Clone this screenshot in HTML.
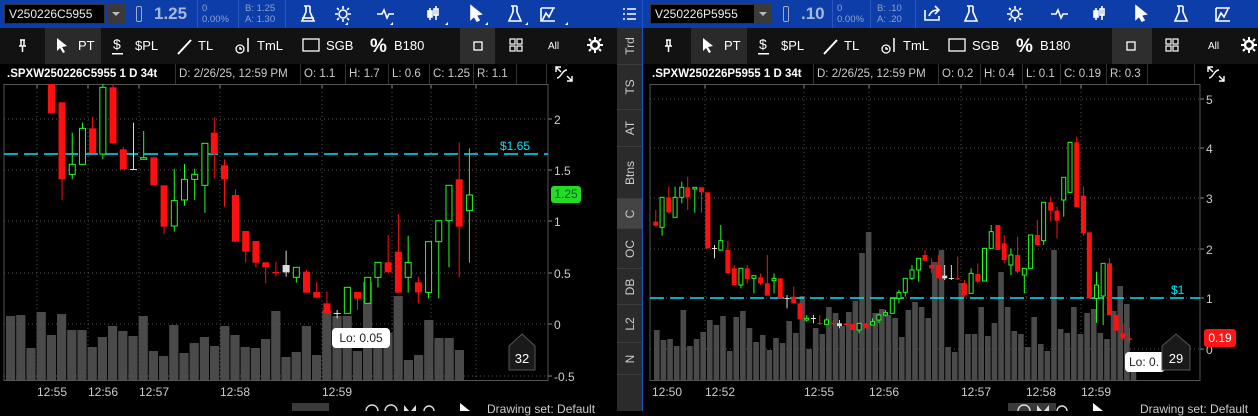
<!DOCTYPE html>
<html><head><meta charset="utf-8"><style>
*{margin:0;padding:0;box-sizing:border-box}
body{width:1258px;height:411px;background:#000;overflow:hidden;font-family:"Liberation Sans",sans-serif;color:#ddd;position:relative}
.a{position:absolute}
.blue{background:#0c3da8;height:28px;top:0}
.sym{background:#000;color:#eee;font-size:12px;line-height:19px;padding-left:4px;top:4px;height:20px;border:1px solid #333}
.dd{background:#3a3a3a;top:4px;height:20px;width:18px}
.tb{background:#121212;top:28px;height:36px}
.hd{top:64px;height:20px;background:#000;font-size:11.5px;color:#ccc;line-height:20px}
.hd span{position:absolute;top:0;border-right:1px solid #333;height:20px;padding-left:3px;white-space:nowrap;overflow:hidden}
.strip{background:#2b2b2b}
.tab{position:absolute;left:0;width:25px;border-bottom:1px solid #3c3c3c;color:#ccc;font-size:12px}
.tab b{position:absolute;left:50%;top:50%;transform:translate(-50%,-50%) rotate(-90deg);font-weight:normal;white-space:nowrap}
.sep{background:#2a56c0;width:1px;top:0;height:28px}
</style></head><body>

<!-- LEFT PANEL -->
<div class="a blue" style="left:0;width:617px"></div>
<div class="a sym" style="left:4px;width:101px">V250226C5955</div>
<div class="a dd" style="left:107px"><svg width="18" height="20"><path d="M5 8h8l-4 4z" fill="#bbb"/></svg></div>
<div class="a" style="left:136px;top:6px;width:6px;height:16px;border:1px solid #aab;border-radius:2px"></div>
<div class="a" style="left:154px;top:4px;font-size:17px;font-weight:bold;color:#a9b8d6">1.25</div>
<div class="a" style="left:202px;top:3px;font-size:9.5px;color:#8fa2cc;line-height:11px">0<br>0.00%</div>
<div class="a" style="left:245px;top:3px;font-size:9.5px;color:#8fa2cc;line-height:11px">B: 1.25<br>A: 1.30</div>
<div class="a sep" style="left:197px"></div><div class="a sep" style="left:238px"></div><div class="a sep" style="left:285px"></div>
<svg class="a" style="left:285px;top:0" width="332" height="28">
 <g fill="none" stroke="#fff" stroke-width="1.6">
  <path d="M19 6h6M21 6v6l-4 9h12l-4-9V6"/><path d="M17 18h12" />
  <circle cx="58" cy="14" r="4"/><path d="M58 6v3M58 19v3M50 14h3M63 14h3M52 8l2 2M62 18l2 2M52 20l2-2M62 10l2-2"/>
  <path d="M92 14h5l2-4 3 8 2-4h5"/>
  <path d="M145 8v12M151 6v14"/><rect x="143" y="11" width="4" height="6" fill="#fff"/><rect x="149" y="9" width="4" height="6"/>
  <path d="M186 6l10 8-5 1 3 5-2 1-3-5-3 3z" fill="#fff"/>
  <path d="M226 6h6M228 6v6l-4 9h12l-4-9V6"/>
  <path d="M256 8h14M257 21l4-8 3 4 4-8"/><path d="M256 8v13h14"/>
 </g>
 <g fill="#fff"><path d="M60 25l3-3v3z"/><path d="M105 25l3-3v3z"/><path d="M160 25l3-3v3z"/><path d="M200 25l3-3v3z"/><path d="M240 25l3-3v3z"/><path d="M280 25l3-3v3z"/></g>
</svg>
<div class="a tb" style="left:0;width:617px"></div>
<div class="a" style="left:45px;top:28px;width:56px;height:36px;background:#2a2a2a"></div>
<div class="a" style="left:460px;top:28px;width:35px;height:36px;background:#2e2e2e"></div>
<svg class="a" style="left:0;top:28px" width="617" height="36" font-family="Liberation Sans" font-size="13" fill="#fff">
 <path d="M20 12h5M21 12v6h3v-6M19 18h7M22.5 18v6" stroke="#fff" fill="none" stroke-width="1.5"/>
 <path d="M57 10l10 8-5 1 3 5-2 1-3-5-3 3z"/><text x="78" y="22">PT</text>
 <text x="113" y="21" font-size="14">$</text><rect x="112" y="25" width="11" height="1.5"/><text x="135" y="22">$PL</text>
 <path d="M178 26l13-14" stroke="#fff" stroke-width="2"/><text x="198" y="22">TL</text>
 <circle cx="240" cy="21" r="4" stroke="#fff" fill="none" stroke-width="1.3"/><path d="M240 19v2h2M248 10v14" stroke="#fff" fill="none" stroke-width="1.5"/><text x="257" y="22">TmL</text>
 <rect x="303" y="11" width="16" height="12" stroke="#fff" fill="none" stroke-width="1.3"/><text x="326" y="22">SGB</text>
 <text x="370" y="24" font-size="19" font-weight="bold">%</text><text x="394" y="22">B180</text>
 <rect x="474" y="14" width="8" height="8" stroke="#fff" fill="none" stroke-width="1.3"/>
 <g stroke="#fff" fill="none" stroke-width="1.2"><rect x="510" y="11" width="5" height="5"/><rect x="517" y="11" width="5" height="5"/><rect x="510" y="18" width="5" height="5"/><rect x="517" y="18" width="5" height="5"/></g>
 <text x="548" y="21" font-size="10">All</text>
 <circle cx="595" cy="17" r="4" stroke="#fff" fill="none" stroke-width="2.5"/><path d="M595 9v3M595 22v3M587 17h3M600 17h3M589 11l2 2M599 21l2 2M589 23l2-2M599 13l2-2" stroke="#fff" stroke-width="2"/>
</svg>
<div class="a hd" style="left:0;width:617px">
 <span style="left:4px;width:172px;font-weight:bold;color:#fff">.SPXW250226C5955 1 D 34t</span>
 <span style="left:176px;width:125px">D: 2/26/25, 12:59 PM</span>
 <span style="left:301px;width:45px">O: 1.1</span>
 <span style="left:346px;width:43px">H: 1.7</span>
 <span style="left:389px;width:41px">L: 0.6</span>
 <span style="left:430px;width:44px">C: 1.25</span>
 <span style="left:474px;width:43px">R: 1.1</span>
 <span style="left:517px;width:30px"></span>
</div>
<svg class="a" style="left:553px;top:64px" width="22" height="20"><path d="M3 3l5 5M3 8V3h5M4 14c4 0 5-8 10-8M14 12l5 5M19 12v5h-5" stroke="#fff" fill="none" stroke-width="1.4"/></svg>
<svg id="L" class="a" style="left:0;top:84px" width="617" height="316"></svg>
<div class="a" style="left:292px;top:403px;width:37px;height:8px;background:#3a3a3a"></div>
<div class="a" style="left:487px;top:402px;font-size:12px;color:#ccc">Drawing set: Default</div>
<svg class="a" style="left:360px;top:400px" width="120" height="11"><g stroke="#ddd" fill="none" stroke-width="1.4"><circle cx="12" cy="11" r="6"/><circle cx="31" cy="11" r="6"/><circle cx="69" cy="11" r="5"/></g><path d="M44 5l5 6-5 0zM56 5l-5 6h5z" fill="#ddd"/><path d="M100 3l10 8h-10z" fill="#fff"/></svg>

<!-- STRIP -->
<div class="a strip" style="left:617px;top:28px;width:25px;height:383px">
 <div class="tab" style="top:0;height:37px"><b>Trd</b></div>
 <div class="tab" style="top:37px;height:45px"><b>TS</b></div>
 <div class="tab" style="top:82px;height:37px"><b>AT</b></div>
 <div class="tab" style="top:119px;height:52px"><b>Btns</b></div>
 <div class="tab" style="top:171px;height:30px;background:#444"><b>C</b></div>
 <div class="tab" style="top:201px;height:40px"><b>OC</b></div>
 <div class="tab" style="top:241px;height:36px"><b>DB</b></div>
 <div class="tab" style="top:277px;height:38px"><b>L2</b></div>
 <div class="tab" style="top:315px;height:32px"><b>N</b></div>
</div>
<div class="a" style="left:617px;top:0;width:25px;height:28px;background:#0c3da8"><svg width="25" height="28"><path d="M6 9h2M10 9h9M6 14h2M10 14h9M6 19h2M10 19h9" stroke="#fff" stroke-width="1.6"/></svg></div>
<div class="a" style="left:642px;top:0;width:1px;height:411px;background:#1e54c8"></div>

<!-- RIGHT PANEL -->
<div class="a blue" style="left:643px;width:615px"></div>
<div class="a sym" style="left:650px;width:121px">V250226P5955</div>
<div class="a dd" style="left:754px"><svg width="18" height="20"><path d="M5 8h8l-4 4z" fill="#bbb"/></svg></div>
<div class="a" style="left:783px;top:6px;width:6px;height:16px;border:1px solid #aab;border-radius:2px"></div>
<div class="a" style="left:801px;top:4px;font-size:17px;font-weight:bold;color:#a9b8d6">.10</div>
<div class="a" style="left:837px;top:3px;font-size:9.5px;color:#8fa2cc;line-height:11px">0<br>0.00%</div>
<div class="a" style="left:877px;top:3px;font-size:9.5px;color:#8fa2cc;line-height:11px">B: .10<br>A: .20</div>
<div class="a sep" style="left:832px"></div><div class="a sep" style="left:870px"></div><div class="a sep" style="left:915px"></div>
<svg class="a" style="left:915px;top:0" width="343" height="28">
 <g fill="none" stroke="#fff" stroke-width="1.6">
  <path d="M10 10v10h14v-4M14 16c2-5 5-6 10-6M20 6l4 4-4 4"/>
  <path d="M52 6h6M54 6v6l-4 9h12l-4-9V6"/>
  <circle cx="100" cy="14" r="4"/><path d="M100 6v3M100 19v3M92 14h3M105 14h3M94 8l2 2M104 18l2 2M94 20l2-2M104 10l2-2"/>
  <path d="M136 14h5l2-4 3 8 2-4h5"/>
  <path d="M181 8v12M187 6v14"/><rect x="179" y="11" width="4" height="6" fill="#fff"/><rect x="185" y="9" width="4" height="6"/>
  <path d="M221 6l10 8-5 1 3 5-2 1-3-5-3 3z" fill="#fff"/>
  <path d="M262 6h6M264 6v6l-4 9h12l-4-9V6"/>
  <path d="M301 8h14M302 21l4-8 3 4 4-8"/><path d="M301 8v13h14"/>
 </g>
</svg>
<div class="a tb" style="left:643px;width:615px"></div>
<div class="a" style="left:691px;top:28px;width:56px;height:36px;background:#2a2a2a"></div>
<div class="a" style="left:1112px;top:28px;width:40px;height:36px;background:#2e2e2e"></div>
<svg class="a" style="left:646px;top:28px" width="612" height="36" font-family="Liberation Sans" font-size="13" fill="#fff">
 <path d="M20 12h5M21 12v6h3v-6M19 18h7M22.5 18v6" stroke="#fff" fill="none" stroke-width="1.5"/>
 <path d="M57 10l10 8-5 1 3 5-2 1-3-5-3 3z"/><text x="78" y="22">PT</text>
 <text x="113" y="21" font-size="14">$</text><rect x="112" y="25" width="11" height="1.5"/><text x="135" y="22">$PL</text>
 <path d="M178 26l13-14" stroke="#fff" stroke-width="2"/><text x="198" y="22">TL</text>
 <circle cx="240" cy="21" r="4" stroke="#fff" fill="none" stroke-width="1.3"/><path d="M240 19v2h2M248 10v14" stroke="#fff" fill="none" stroke-width="1.5"/><text x="257" y="22">TmL</text>
 <rect x="303" y="11" width="16" height="12" stroke="#fff" fill="none" stroke-width="1.3"/><text x="326" y="22">SGB</text>
 <text x="370" y="24" font-size="19" font-weight="bold">%</text><text x="394" y="22">B180</text>
 <rect x="481" y="14" width="8" height="8" stroke="#fff" fill="none" stroke-width="1.3"/>
 <g stroke="#fff" fill="none" stroke-width="1.2"><rect x="520" y="11" width="5" height="5"/><rect x="527" y="11" width="5" height="5"/><rect x="520" y="18" width="5" height="5"/><rect x="527" y="18" width="5" height="5"/></g>
 <text x="562" y="21" font-size="10">All</text>
 <circle cx="603" cy="17" r="4" stroke="#fff" fill="none" stroke-width="2.5"/><path d="M603 9v3M603 22v3M595 17h3M608 17h3M597 11l2 2M607 21l2 2M597 23l2-2M607 13l2-2" stroke="#fff" stroke-width="2"/>
</svg>
<div class="a hd" style="left:643px;width:615px">
 <span style="left:6px;width:165px;font-weight:bold;color:#fff">.SPXW250226P5955 1 D 34t</span>
 <span style="left:171px;width:125px">D: 2/26/25, 12:59 PM</span>
 <span style="left:296px;width:42px">O: 0.2</span>
 <span style="left:338px;width:42px">H: 0.4</span>
 <span style="left:380px;width:38px">L: 0.1</span>
 <span style="left:418px;width:46px">C: 0.19</span>
 <span style="left:464px;width:41px">R: 0.3</span>
 <span style="left:505px;width:47px"></span>
</div>
<svg class="a" style="left:1205px;top:64px" width="22" height="20"><path d="M3 3l5 5M3 8V3h5M4 14c4 0 5-8 10-8M14 12l5 5M19 12v5h-5" stroke="#fff" fill="none" stroke-width="1.4"/></svg>
<svg id="R" class="a" style="left:643px;top:84px" width="615" height="316"></svg>
<div class="a" style="left:1008px;top:403px;width:48px;height:8px;background:#3a3a3a"></div>
<div class="a" style="left:1140px;top:402px;font-size:12px;color:#ccc">Drawing set: Default</div>
<svg class="a" style="left:1015px;top:400px" width="120" height="11"><g stroke="#ddd" fill="none" stroke-width="1.4"><circle cx="-10" cy="11" r="6"/><circle cx="9" cy="11" r="6"/><circle cx="47" cy="11" r="5"/></g><path d="M22 5l5 6-5 0zM34 5l-5 6h5z" fill="#ddd"/><path d="M78 3l10 8h-10z" fill="#fff"/></svg>

<script>
function el(s,t,a,txt){var e=document.createElementNS("http://www.w3.org/2000/svg",t);for(var k in a)e.setAttribute(k,a[k]);if(txt)e.textContent=txt;s.appendChild(e);return e;}
function chart(id,o){
 var s=document.getElementById(id),oy=84;
 var vx=o.vx0;o.vol.forEach(function(t,i){el(s,'rect',{x:vx+i*o.vw,y:t-oy,width:o.vw-1,height:o.pb-t,fill:'#4a4a4a'});});
 o.ticks.forEach(function(t){el(s,'line',{x1:o.pl,x2:o.pr,y1:t[1]-oy,y2:t[1]-oy,stroke:'#555','stroke-dasharray':'1 3'});
   el(s,'line',{x1:o.pr,x2:o.pr+4,y1:t[1]-oy,y2:t[1]-oy,stroke:'#888'});
   el(s,'text',{x:o.pr+6,y:t[1]-oy+5,fill:'#ccc','font-size':12,'font-family':'Liberation Sans'},t[0]);});
 o.vg.forEach(function(x){el(s,'line',{x1:x,x2:x,y1:0,y2:o.pb-oy,stroke:'#555','stroke-dasharray':'1 3'});el(s,'line',{x1:x,x2:x,y1:0,y2:4,stroke:'#888'});});
 el(s,'rect',{x:o.pl,y:0.5,width:o.pr-o.pl,height:o.pb-oy,fill:'none',stroke:'#555'});
 o.tl.forEach(function(t){el(s,'text',{x:t[1],y:312,fill:'#ccc','font-size':12,'font-family':'Liberation Sans'},t[0]);});
 el(s,'line',{x1:o.pl,x2:o.pr,y1:o.lvl-oy,y2:o.lvl-oy,stroke:'#00e8ff','stroke-width':1.4,'stroke-dasharray':'14 6'});
 el(s,'text',{x:o.lvlx,y:o.lvl-oy-4,fill:'#00e8ff','font-size':12,'font-family':'Liberation Sans'},o.lvlt);
 o.c.forEach(function(c){
  var x=c[0]/o.sx+o.ox,bt=c[1]/3+80-oy,bb=c[2]/3+80-oy,wt=c[3]/3+80-oy,wb=c[4]/3+80-oy,col=c[5];
  var w=o.bw,clr=col=='r'?'#ff1010':col=='g'?'#22ff22':'#ddd';
  el(s,'line',{x1:x,x2:x,y1:wt,y2:wb,stroke:clr,'stroke-width':1});
  var h=Math.max(bb-bt,1);
  if(col=='g')el(s,'rect',{x:x-w/2+0.5,y:bt,width:w-1,height:h,fill:'#000',stroke:clr,'stroke-width':1});
  else el(s,'rect',{x:x-w/2,y:bt,width:w,height:h,fill:clr});
 });
}
chart('L',{sx:2.45,ox:0,bw:7,pl:4,pr:548,pb:380,vx0:6,vw:10.2,lvl:154,lvlx:500,lvlt:'$1.65',
 ticks:[['2',119],['1.5',170],['1',221],['0.5',273],['0',324],['-0.5',376]],
 vg:[37,88,139,220,322,392,431,476],tl:[['12:55',37],['12:56',88],['12:57',139],['12:58',220],['12:59',322]],
 vol:[316,315,348,312,335,314,330,330,347,337,326,331,336,316,351,356,325,353,343,337,346,326,335,347,348,339,311,357,352,326,355,310,316,316,351,282,333,333,296,360,355,320,338,338,350],
 c:[[126,10,100,5,100,'r'],[152,67,298,67,360,'r'],[177,253,283,158,298,'g'],[202,145,253,128,253,'g'],[227,145,220,110,220,'r'],[252,22,222,10,238,'g'],[277,22,190,10,190,'r'],[302,208,268,200,268,'r'],[327,267,269,128,268,'w'],[352,233,238,153,238,'g'],[377,232,316,232,316,'r'],[402,316,440,316,462,'r'],[427,362,438,266,455,'g'],[452,298,360,252,377,'g'],[477,283,298,266,360,'g'],[502,190,316,190,398,'g'],[525,158,222,112,295,'r'],[550,256,298,238,380,'r'],[577,345,485,328,485,'r'],[602,453,515,453,548,'r'],[627,483,548,483,562,'r'],[651,547,562,547,610,'r'],[676,576,578,545,590,'r'],[701,555,577,512,590,'w'],[726,562,592,562,608,'g'],[751,575,638,570,638,'r'],[776,636,653,605,655,'r'],[801,670,700,635,700,'r'],[826,699,701,690,715,'w'],[851,622,700,622,700,'g'],[876,636,656,636,690,'r'],[901,592,670,592,670,'g'],[926,547,592,547,622,'g'],[951,547,577,465,577,'r'],[976,515,638,403,638,'r'],[1000,547,592,467,638,'g'],[1025,607,637,590,670,'r'],[1050,485,637,485,655,'g'],[1075,422,485,422,655,'g'],[1100,316,422,316,562,'g'],[1125,298,440,187,592,'r'],[1150,345,392,205,548,'g']]});
chart('R',{sx:2.537,ox:-3,bw:5,pl:7,pr:557,pb:380,vx0:11,vw:6.62,lvl:298,lvlx:528,lvlt:'$1',
 ticks:[['5',99],['4',148],['3',198],['2',249],['1',298],['0',349]],
 vg:[62,161,226,318,383,438],tl:[['12:50',9],['12:52',62],['12:55',161],['12:56',226],['12:57',318],['12:58',383],['12:59',438]],
 vol:[330,340,339,346,310,346,339,332,320,325,316,351,317,311,328,342,335,350,338,343,321,333,296,349,328,334,307,313,326,312,301,253,232,313,309,315,318,337,310,302,307,318,262,250,347,352,283,334,334,307,336,323,272,307,331,334,347,317,344,351,250,329,333,307,334,313,309,333,339,311,286,304,370],
 c:[[40,425,437,390,440,'r'],[56,352,442,352,467,'g'],[73,352,397,320,400,'r'],[89,352,412,320,412,'g'],[106,322,352,305,370,'g'],[121,322,352,290,390,'r'],[139,322,327,322,398,'g'],[156,322,337,322,398,'r'],[172,337,505,337,505,'r'],[189,504,506,495,535,'w'],[205,482,510,435,512,'g'],[223,510,580,482,580,'r'],[239,565,615,555,615,'r'],[256,565,615,565,625,'g'],[272,565,597,555,610,'r'],[289,587,595,587,640,'g'],[306,592,610,580,615,'r'],[323,610,647,525,647,'r'],[340,595,602,580,640,'g'],[356,595,655,595,655,'r'],[373,654,656,645,685,'w'],[390,650,670,620,670,'r'],[406,670,718,670,718,'r'],[423,715,720,705,725,'g'],[440,714,716,705,730,'w'],[456,729,731,705,735,'r'],[473,720,733,715,735,'g'],[490,729,731,720,740,'r'],[506,730,738,720,745,'w'],[523,730,735,730,735,'r'],[540,732,750,732,750,'r'],[556,730,750,730,760,'g'],[573,730,745,730,745,'r'],[590,725,735,715,735,'g'],[606,705,720,700,730,'g'],[623,698,705,690,710,'g'],[640,655,700,655,700,'g'],[657,637,655,630,670,'g'],[673,595,637,595,650,'g'],[690,570,595,555,600,'g'],[707,535,570,535,605,'g'],[723,525,542,510,545,'r'],[740,555,565,535,580,'r'],[757,555,595,525,595,'r'],[773,587,595,555,600,'w'],[790,594,596,555,600,'w'],[806,595,598,530,600,'r'],[823,610,645,600,650,'r'],[840,580,640,565,640,'g'],[857,582,605,550,610,'r'],[874,505,603,505,603,'g'],[891,455,505,435,505,'g'],[908,435,510,435,510,'r'],[924,490,540,465,550,'r'],[941,525,555,505,585,'g'],[958,525,575,470,580,'r'],[975,565,585,565,640,'g'],[991,465,565,465,565,'g'],[1008,465,495,420,495,'r'],[1024,367,482,367,495,'g'],[1042,367,392,350,425,'r'],[1058,392,422,380,475,'r'],[1075,292,360,292,410,'g'],[1091,187,337,187,337,'g'],[1108,187,382,170,382,'r'],[1125,347,460,320,467,'r'],[1140,457,655,457,655,'r'],[1158,615,655,575,728,'g'],[1175,550,648,550,735,'g'],[1191,550,705,535,705,'r'],[1208,705,752,705,752,'r'],[1225,760,775,730,780,'r'],[1242,775,779,745,790,'r']]});
</script>

<div class="a" style="left:551px;top:186px;width:30px;height:17px;background:#22dd22;border-radius:3px;color:#063;font-size:12px;text-align:center;line-height:17px">1.25</div>
<div class="a" style="left:332px;top:328px;width:58px;height:20px;background:#fff;border-radius:4px;color:#222;font-size:12px;line-height:20px;text-align:center">Lo: 0.05</div>
<svg class="a" style="left:508px;top:333px" width="28" height="38"><path d="M1 13L14 1l13 12v24H1z" fill="#1a1a1a" stroke="#555"/><text x="14" y="30" fill="#fff" font-size="13" text-anchor="middle" font-family="Liberation Sans">32</text></svg>
<div class="a" style="left:1204px;top:329px;width:32px;height:18px;background:#ff1515;border-radius:3px;color:#fff;font-size:12px;line-height:18px;text-align:center">0.19</div>
<div class="a" style="left:1125px;top:352px;width:40px;height:20px;background:#fff;border-radius:4px;color:#222;font-size:12px;line-height:20px;padding-left:4px;overflow:hidden">Lo: 0.</div>
<svg class="a" style="left:1161px;top:333px" width="30" height="38"><path d="M1 13L15 1l14 12v24H1z" fill="#1a1a1a" stroke="#555"/><text x="15" y="30" fill="#fff" font-size="13" text-anchor="middle" font-family="Liberation Sans">29</text></svg>
</body></html>
